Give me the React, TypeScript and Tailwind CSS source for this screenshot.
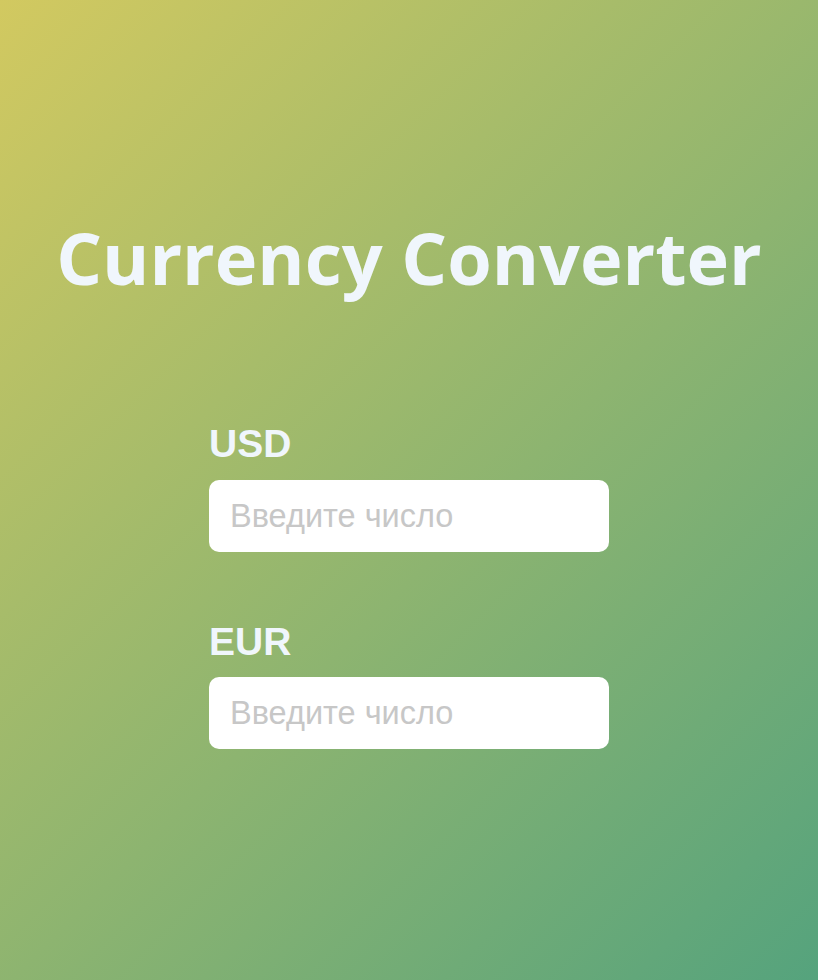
import React from "react";

export default function App() {
  return (
    <div className="w-full min-h-[980px] bg-[linear-gradient(135deg,#d2c960_0%,#55a37d_100%)] flex flex-col items-center">
      <h1 className="mt-[208px] text-[72px] font-bold leading-[98px] text-[#f0f6fc] whitespace-nowrap [font-family:'Open_Sans',sans-serif]">
        Currency Converter
      </h1>
      <div className="mt-[116px] w-[400px] flex flex-col [font-family:'Liberation_Sans',Arial,sans-serif]">
        <label className="text-[39px] font-bold leading-[43px] text-[#f0f6fc]">USD</label>
        <input
          type="text"
          placeholder="Введите число"
          className="mt-[15px] h-[72px] w-[400px] rounded-[10px] bg-white px-[21px] text-[32.5px] text-[#333] placeholder:text-[#c7c7c7] outline-none"
        />
        <label className="mt-[68px] text-[39px] font-bold leading-[43px] text-[#f0f6fc]">EUR</label>
        <input
          type="text"
          placeholder="Введите число"
          className="mt-[14px] h-[72px] w-[400px] rounded-[10px] bg-white px-[21px] text-[32.5px] text-[#333] placeholder:text-[#c7c7c7] outline-none"
        />
      </div>
    </div>
  );
}
